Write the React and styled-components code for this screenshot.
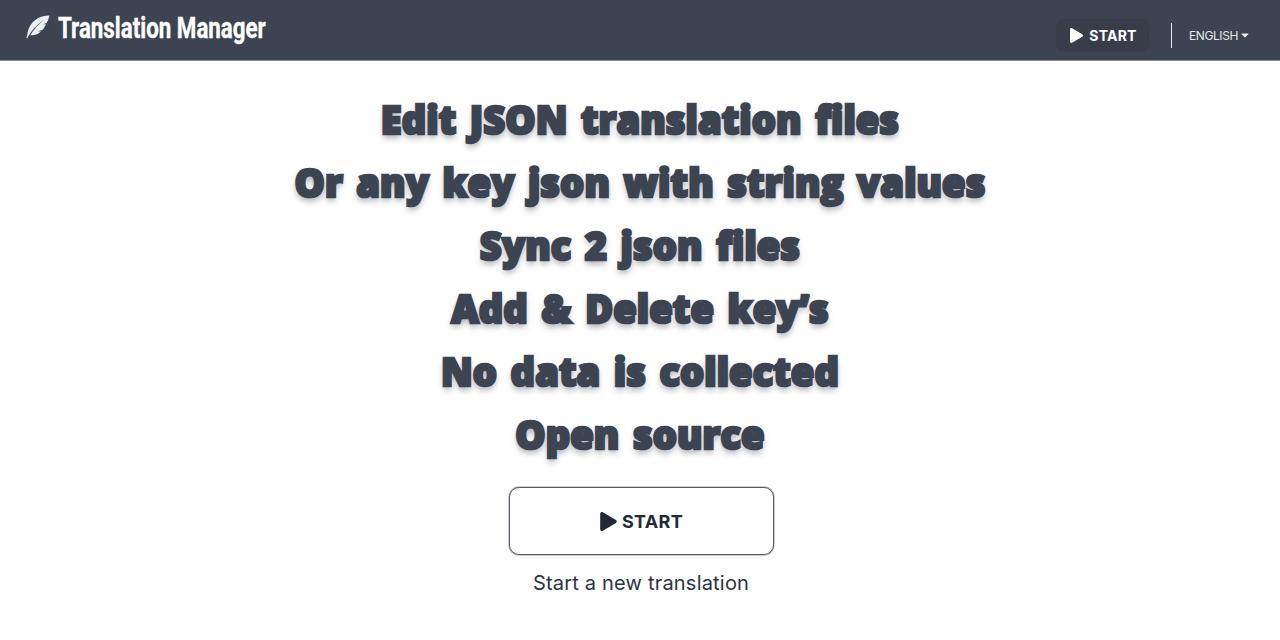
import React from "react";
import styled, { createGlobalStyle } from "styled-components";
import { FaPlay, FaCaretDown } from "react-icons/fa";

const Global = createGlobalStyle`
  html, body { margin: 0; padding: 0; background: #fff; }
  body { font-family: Inter, "Noto Sans", sans-serif; color: #1f2937; }
`;

const Page = styled.div`
  width: 1280px;
  height: 640px;
  overflow: hidden;
  display: flex;
  flex-direction: column;
`;

const Header = styled.header`
  height: 61px;
  flex: none;
  background: #3d4451;
  border-bottom: 1px solid #8b8f98;
  box-sizing: border-box;
  display: flex;
  align-items: center;
  justify-content: space-between;
  padding: 0 30px 0 26px;
`;

const Brand = styled.div`
  display: flex;
  align-items: center;
  gap: 8px;
  color: #fff;
  margin-top: -4px;
`;

const Quill = styled.svg`
  width: 24px;
  height: 24px;
  flex: none;
  color: #eceef0;
  margin-top: -2px;
`;

const BrandName = styled.span`
  font-family: Roboto, sans-serif;
  font-weight: 700;
  font-size: 29px;
  line-height: 32px;
  display: inline-block;
  transform: scaleX(0.77);
  transform-origin: left center;
  -webkit-text-stroke: 0.4px #fff;
  white-space: nowrap;
  width: 207px;
`;

const Actions = styled.div`
  display: flex;
  align-items: center;
  margin-top: 10px;
`;

const HeaderStart = styled.button`
  width: 93px;
  height: 33px;
  border: 0;
  border-radius: 8px;
  background: #373e4a;
  color: #fff;
  display: flex;
  align-items: center;
  justify-content: center;
  gap: 6px;
  font-family: Inter, sans-serif;
  font-weight: 700;
  font-size: 14px;
  letter-spacing: 0.2px;
  padding: 0 0 0 2px;
  svg { width: 13px; height: 15px; }
`;

const Divider = styled.span`
  width: 1px;
  height: 25px;
  background: #e5e7eb;
  margin: 0 17px 0 22px;
`;

const Lang = styled.span`
  display: flex;
  align-items: center;
  gap: 2px;
  color: #e5e7eb;
  font-family: Inter, sans-serif;
  font-size: 12px;
  letter-spacing: -0.4px;
  svg { width: 10px; height: 12px; }
`;

const Main = styled.main`
  display: flex;
  flex-direction: column;
  align-items: center;
  padding-top: 27px;
`;

const Lines = styled.div`
  display: flex;
  flex-direction: column;
  align-items: center;
`;

const Line = styled.h2`
  margin: 0;
  height: 63px;
  line-height: 63px;
  font-family: "Open Sans", sans-serif;
  font-weight: 800;
  font-size: 38px;
  letter-spacing: 0.1px;
  word-spacing: 3.5px;
  color: #3d4451;
  -webkit-text-stroke: 2.6px #3d4451;
  text-shadow: 0 4px 6px rgba(61, 68, 81, 0.45);
  white-space: nowrap;
`;

const StartButton = styled.button`
  margin-top: 21px;
  margin-left: 3px;
  width: 265px;
  height: 68px;
  box-sizing: border-box;
  background: #fff;
  border: 1px solid #555b66;
  box-shadow: 0 0 0 0.75px rgba(95, 101, 112, 0.45);
  border-radius: 10px;
  display: flex;
  align-items: center;
  justify-content: center;
  gap: 5px;
  color: #1f2937;
  font-family: Inter, sans-serif;
  font-weight: 700;
  font-size: 18px;
  letter-spacing: 0.3px;
  padding: 0;
  svg { width: 17px; height: 19px; }
`;

const Caption = styled.p`
  margin: 16px 0 0 2px;
  font-family: Inter, sans-serif;
  font-size: 20px;
  line-height: 24px;
  letter-spacing: 0.2px;
  color: #2c3442;
`;

const lines = [
  "Edit JSON translation files",
  "Or any key json with string values",
  "Sync 2 json files",
  "Add & Delete key’s",
  "No data is collected",
  "Open source",
];

export default function App() {
  return (
    <Page>
      <Global />
      <Header>
        <Brand>
          <Quill viewBox="0 0 24 24" aria-hidden="true">
            <path
              fill="currentColor"
              fillRule="evenodd"
              d="M23.5 .5C18 .6 13.5 2 10 4.5 6 7.3 2.8 11.5 1.6 17.5L1 21.5 .2 23l1 .6.9-2C7 13.5 13 8 18 5 13.5 8.6 8 14 4.2 20.2 9 20.5 12.5 19 15 16.4l-3-.2 4.7-1.4c1.5-2 2.4-3.6 3.2-5.6l-3 .1 3.7-1.4C22 5.5 23 3 23.5 .5Z"
            />
          </Quill>
          <BrandName>Translation Manager</BrandName>
        </Brand>
        <Actions>
          <HeaderStart><FaPlay />START</HeaderStart>
          <Divider />
          <Lang>ENGLISH<FaCaretDown /></Lang>
        </Actions>
      </Header>
      <Main>
        <Lines>
          {lines.map((t) => <Line key={t}>{t}</Line>)}
        </Lines>
        <StartButton><FaPlay />START</StartButton>
        <Caption>Start a new translation</Caption>
      </Main>
    </Page>
  );
}
